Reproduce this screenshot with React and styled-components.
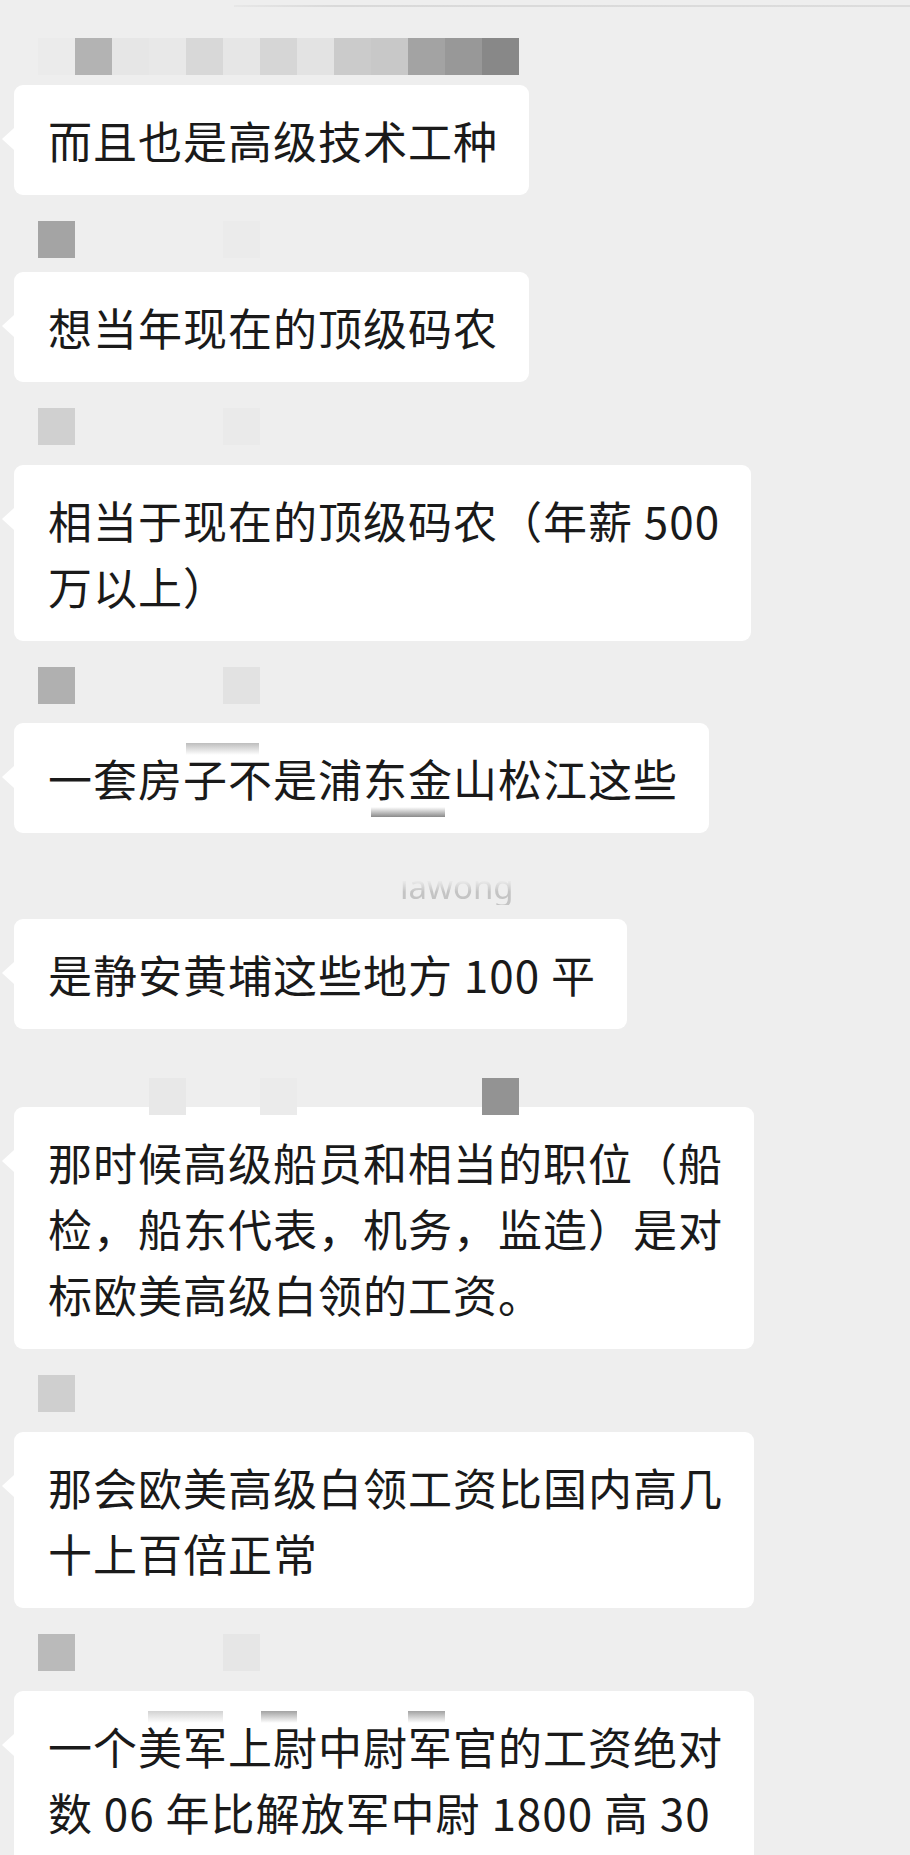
import React from "react";
import styled, { createGlobalStyle } from "styled-components";

const GlobalStyle = createGlobalStyle`
  html, body {
    margin: 0;
    padding: 0;
    background: #eeeeee;
  }
  body {
    font-family: "Noto Sans CJK SC", "Noto Sans", sans-serif;
    -webkit-font-smoothing: antialiased;
  }
`;

const Page = styled.div`
  width: 910px;
  min-height: 1855px;
  background: #eeeeee;
  padding-top: 5px;
  box-sizing: border-box;
  overflow: hidden;
`;

const TopRule = styled.div`
  margin-left: 234px;
  height: 2px;
  background: linear-gradient(to right, rgba(214, 214, 214, 0.3), #d9d9d9 15%, #dcdcdc);
`;

const Feed = styled.div`
  display: flex;
  flex-direction: column;
  align-items: flex-start;
`;

const Message = styled.div`
  display: flex;
  flex-direction: column;
  align-items: flex-start;
  margin-top: ${(p) => p.$mt}px;
`;

const NameRow = styled.div`
  display: grid;
  grid-template-columns: repeat(13, 37px);
  height: 37px;
  padding-left: 38px;
  position: relative;
  z-index: 1;
`;

const Tile = styled.div`
  grid-column: ${(p) => p.$col + 1};
  grid-row: 1;
  height: 37px;
  background: ${(p) => p.$color};
`;

const GhostName = styled.span`
  grid-column: 11 / span 3;
  grid-row: 1;
  margin-left: -8px;
  margin-top: 9px;
  font-family: "Noto Sans", sans-serif;
  font-size: 33px;
  line-height: 37px;
  color: #c4c4c4;
  white-space: nowrap;
  -webkit-mask-image: linear-gradient(to bottom, transparent 32%, #000 64%);
  mask-image: linear-gradient(to bottom, transparent 32%, #000 64%);
`;

const Bubble = styled.div`
  position: relative;
  margin-left: 14px;
  margin-top: ${(p) => p.$gap}px;
  padding: 22px 31px 22px 34px;
  background: #ffffff;
  border-radius: 9px;
  font-family: "Noto Sans CJK SC", "Noto Sans", sans-serif;
  font-size: 44px;
  line-height: 66px;
  letter-spacing: 1px;
  color: #1a1a1a;
  white-space: nowrap;

  &::before {
    content: "";
    position: absolute;
    left: -12px;
    top: 43px;
    width: 0;
    height: 0;
    border-top: 11px solid transparent;
    border-bottom: 11px solid transparent;
    border-right: 12px solid #ffffff;
  }
`;

const Smudge = styled.span`
  position: absolute;
  left: ${(p) => p.$left}px;
  top: ${(p) => p.$top}px;
  width: ${(p) => p.$w}px;
  height: ${(p) => p.$h}px;
  background: linear-gradient(
    ${(p) => (p.$up ? "to top" : "to bottom")},
    ${(p) => p.$color},
    rgba(255, 255, 255, 0)
  );
`;

const messages = [
  {
    mt: 31,
    gap: 10,
    tiles: [
      "#ebebeb", "#b3b3b3", "#e6e6e6", "#e8e8e8", "#d8d8d8", "#e6e6e6", "#d6d6d6",
      "#e3e3e3", "#cbcbcb", "#c8c8c8", "#a3a3a3", "#989898", "#888888",
    ].map((c, i) => [i, c]),
    lines: ["而且也是高级技术工种"],
  },
  {
    mt: 26,
    gap: 14,
    tiles: [[0, "#a4a4a4"], [5, "#ebebeb"]],
    lines: ["想当年现在的顶级码农"],
  },
  {
    mt: 26,
    gap: 20,
    tiles: [[0, "#d0d0d0"], [5, "#eaeaea"]],
    lines: ["相当于现在的顶级码农（年薪 500", "万以上）"],
  },
  {
    mt: 26,
    gap: 19,
    tiles: [[0, "#b0b0b0"], [5, "#e2e2e2"]],
    lines: ["一套房子不是浦东金山松江这些"],
    smudges: [
      { left: 172, top: 20, w: 73, h: 12, color: "#bdbdbd" },
      { left: 357, top: 84, w: 74, h: 10, color: "#8a8a8a", up: true },
    ],
  },
  {
    mt: 26,
    gap: 23,
    tiles: [],
    ghost: "iawong",
    lines: ["是静安黄埔这些地方 100 平"],
  },
  {
    mt: 49,
    gap: -8,
    tiles: [[3, "#e8e8e8"], [6, "#ebebeb"], [12, "#939393"]],
    lines: [
      "那时候高级船员和相当的职位（船",
      "检，船东代表，机务，监造）是对",
      "标欧美高级白领的工资。",
    ],
  },
  {
    mt: 26,
    gap: 20,
    tiles: [[0, "#cfcfcf"]],
    lines: ["那会欧美高级白领工资比国内高几", "十上百倍正常"],
  },
  {
    mt: 26,
    gap: 20,
    tiles: [[0, "#bababa"], [5, "#e6e6e6"]],
    lines: ["一个美军上尉中尉军官的工资绝对", "数 06 年比解放军中尉 1800 高 30"],
    smudges: [
      { left: 134, top: 20, w: 75, h: 12, color: "#d2d2d2" },
      { left: 247, top: 20, w: 36, h: 12, color: "#a2a2a2" },
      { left: 394, top: 20, w: 37, h: 12, color: "#a2a2a2" },
    ],
  },
];

export default function App() {
  return (
    <>
      <GlobalStyle />
      <Page>
        <TopRule />
        <Feed>
          {messages.map((m, idx) => (
            <Message key={idx} $mt={m.mt}>
              <NameRow>
                {m.tiles.map(([col, color]) => (
                  <Tile key={col} $col={col} $color={color} />
                ))}
                {m.ghost && <GhostName>{m.ghost}</GhostName>}
              </NameRow>
              <Bubble $gap={m.gap}>
                {m.smudges &&
                  m.smudges.map((s, i) => (
                    <Smudge
                      key={i}
                      $left={s.left}
                      $top={s.top}
                      $w={s.w}
                      $h={s.h}
                      $color={s.color}
                      $up={s.up}
                    />
                  ))}
                {m.lines.map((line, i) => (
                  <React.Fragment key={i}>
                    {i > 0 && <br />}
                    {line}
                  </React.Fragment>
                ))}
              </Bubble>
            </Message>
          ))}
        </Feed>
      </Page>
    </>
  );
}
